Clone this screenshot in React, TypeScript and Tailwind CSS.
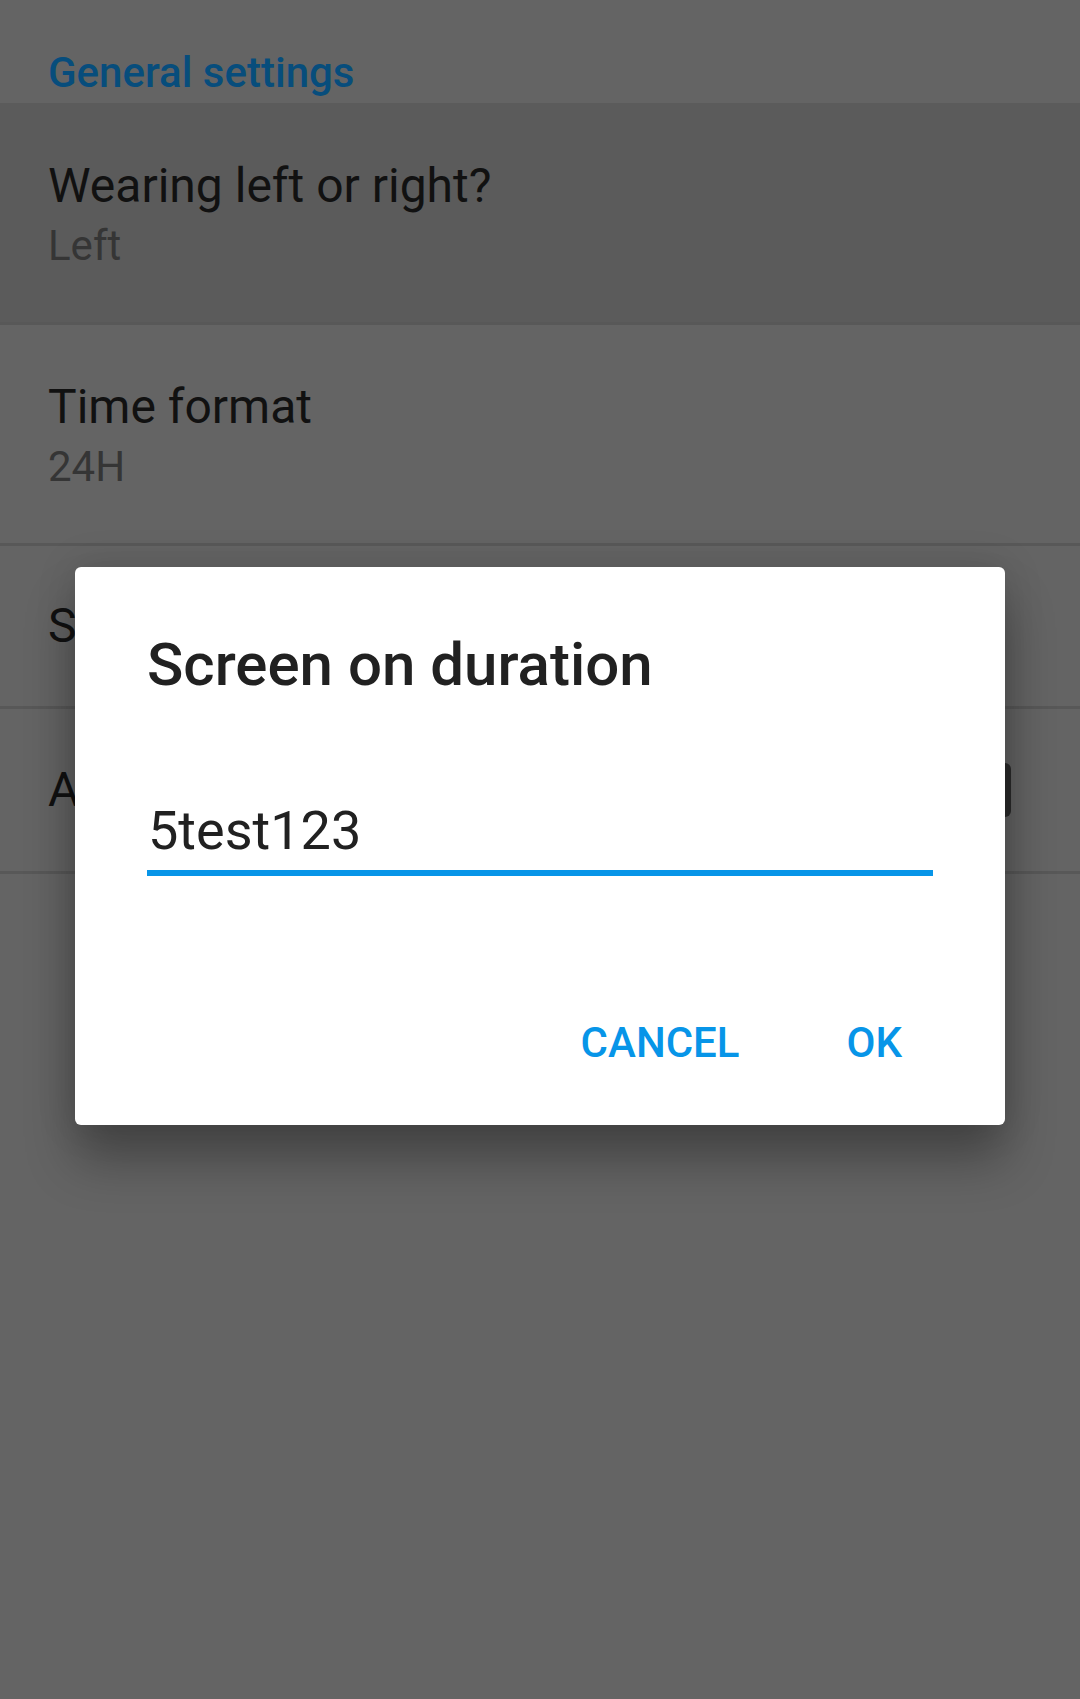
import React from "react";

const font = { fontFamily: "Roboto, 'Noto Sans', 'Liberation Sans', sans-serif" };

function Divider() {
  return <div className="h-[3px] bg-[#585858]" />;
}

export default function App() {
  return (
    <div className="relative w-[1080px] h-[1699px] bg-[#646464] overflow-hidden" style={font}>
      {/* Settings list (dimmed by scrim) */}
      <div className="flex flex-col">
        <div className="h-[103px] pl-[48px] pt-[49px]">
          <div className="text-[42px] leading-[48px] font-medium text-[#074d7c]">General settings</div>
        </div>
        <div className="bg-[#5b5b5b] pl-[48px] pt-[55px] pb-[51px] flex flex-col gap-[7px]">
          <div className="text-[48px] leading-[56px] text-[#111111]">Wearing left or right?</div>
          <div className="text-[42px] leading-[50px] text-[#353535]">Left</div>
        </div>
        <Divider />
        <div className="pl-[48px] pt-[54px] pb-[51px] flex flex-col gap-[7px]">
          <div className="text-[48px] leading-[56px] text-[#111111]">Time format</div>
          <div className="text-[42px] leading-[50px] text-[#353535]">24H</div>
        </div>
        <Divider />
        <div className="h-[160px] pl-[48px] flex items-center">
          <div className="text-[48px] leading-[56px] text-[#111111]">Screen on duration</div>
        </div>
        <Divider />
        <div className="h-[162px] pl-[48px] pr-[69px] flex items-center justify-between">
          <div className="text-[48px] leading-[56px] text-[#111111]">Always on</div>
          <div className="w-[64px] h-[54px] rounded-[6px] bg-[#2b2b2b]" />
        </div>
        <Divider />
      </div>

      {/* Dialog */}
      <div className="absolute left-[75px] top-[567px] w-[930px] h-[558px] bg-white rounded-[6px] shadow-[0_36px_50px_rgba(0,0,0,0.3),0_0_40px_rgba(0,0,0,0.14)] flex flex-col">
        <div className="pl-[72px] pt-[62px] text-[60px] leading-[72px] font-medium text-[#212121]">
          Screen on duration
        </div>
        <div className="mx-[72px] mt-[98px]">
          <div className="pl-[1px] text-[54px] leading-[64px] text-[#212121]">5test123</div>
          <div className="mt-[7px] h-[6px] bg-[#0795e8]" />
        </div>
        <div className="mt-[143px] flex justify-end pr-[103px] gap-[107px] text-[42px] leading-[48px] font-medium text-[#0795e8]">
          <span>CANCEL</span>
          <span>OK</span>
        </div>
      </div>
    </div>
  );
}
